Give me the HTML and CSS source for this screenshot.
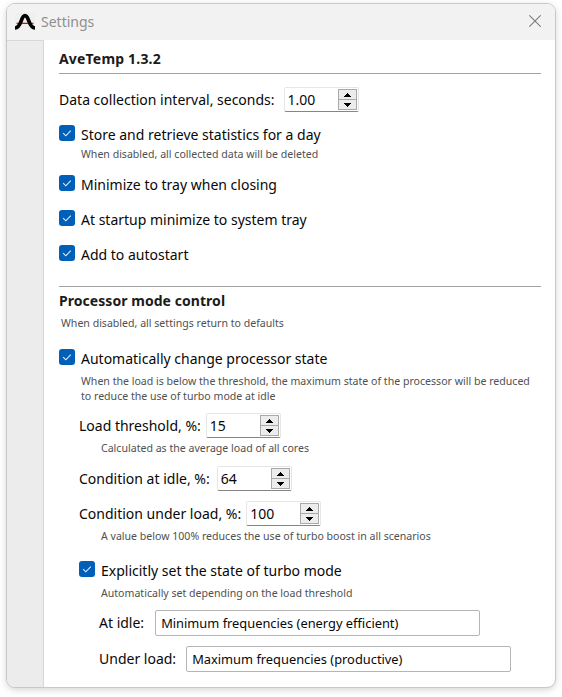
FILE: index.html
```
<!DOCTYPE html>
<html lang="en">
<head>
<meta charset="utf-8">
<title>Settings</title>
<link rel="stylesheet" href="styles.css">
</head>
<body>
<svg class="defs" aria-hidden="true">
  <symbol id="check" viewBox="0 0 16 16"><path d="M4.200 8.200l2.600 2.600 5-5.100" fill="none" stroke="#e4effa" stroke-width="1.100"/></symbol>
  <symbol id="arrows" viewBox="0 0 19 21" shape-rendering="crispEdges">
    <rect width="19" height="21" fill="#ececec"/>
    <path d="M.5.5h18v20H.5zM0 10.500h19" fill="none" stroke="#a9a9a9"/>
    <path d="M9 4h1v1h1v1h1v1h1v1H6V7h1V6h1V5h1zM6 14h7v1h-1v1h-1v1h-1v1H9v-1H8v-1H7v-1H6z" fill="#000"/>
  </symbol>
</svg>
<div class="window">
  <header class="titlebar">
    <svg class="logo" width="20" height="18" viewBox="0 0 20 18"><rect width="20" height="17" fill="#efefef"/><path d="M1.500 10.400h17" stroke="#e01b24" stroke-width="1.400"/><path d="M0 15C6.500 15 5.800 2.700 10 2.700s3.500 12.300 10 12.300" fill="none" stroke="#000" stroke-width="3.700"/><path d="M7 10.400h6" stroke="#c8141d" stroke-width="1"/></svg>
    <span class="title">Settings</span>
    <svg class="close" width="12" height="12" viewBox="0 0 12 12"><path d="M.3.3l11.400 11.400M11.700.3L.3 11.700" stroke="#7c7c7c" stroke-width="1.100"/></svg>
  </header>
  <div class="body">
    <aside class="rail"></aside>
    <main class="content">
      <h1 class="heading version">AveTemp 1.3.2</h1>
      <div class="field interval"><span>Data collection interval, seconds:</span><span class="spin"><span>1.00</span><svg><use href="#arrows"/></svg></span></div>
      <div class="option"><svg class="box"><use href="#check"/></svg><span>Store and retrieve statistics for a day</span></div>
      <p class="hint stats-hint">When disabled, all collected data will be deleted</p>
      <div class="option"><svg class="box"><use href="#check"/></svg><span>Minimize to tray when closing</span></div>
      <div class="option spaced"><svg class="box"><use href="#check"/></svg><span>At startup minimize to system tray</span></div>
      <div class="option spaced"><svg class="box"><use href="#check"/></svg><span>Add to autostart</span></div>
      <h2 class="heading processor">Processor mode control</h2>
      <p class="hint defaults-hint">When disabled, all settings return to defaults</p>
      <div class="option"><svg class="box"><use href="#check"/></svg><span>Automatically change processor state</span></div>
      <p class="hint auto-hint">When the load is below the threshold, the maximum state of the processor will be reduced<br>to reduce the use of turbo mode at idle</p>
      <section class="nested">
        <div class="field"><span>Load threshold, %:</span><span class="spin"><span>15</span><svg><use href="#arrows"/></svg></span></div>
        <p class="hint load-hint">Calculated as the average load of all cores</p>
        <div class="field idle"><span>Condition at idle, %:</span><span class="spin"><span>64</span><svg><use href="#arrows"/></svg></span></div>
        <div class="field under"><span>Condition under load, %:</span><span class="spin"><span>100</span><svg><use href="#arrows"/></svg></span></div>
        <p class="hint boost-hint">A value below 100% reduces the use of turbo boost in all scenarios</p>
        <div class="option"><svg class="box"><use href="#check"/></svg><span>Explicitly set the state of turbo mode</span></div>
        <p class="hint turbo-hint">Automatically set depending on the load threshold</p>
        <div class="field mode"><span>At idle:</span><span class="select idle-select">Minimum frequencies (energy efficient)</span></div>
        <div class="field mode"><span>Under load:</span><span class="select">Maximum frequencies (productive)</span></div>
      </section>
    </main>
  </div>
</div>
</body>
</html>
```
FILE: styles.css
```
* { box-sizing: border-box; }
body {
  margin: 0;
  padding: 3px 6px 9px;
  height: 697px;
  background: #fff;
  color: #080808;
  font: 14px/20px "Noto Sans", "Open Sans", sans-serif;
  white-space: nowrap;
  overflow: hidden;
}
h1, h2, p { margin: 0; }
.defs { display: none; }
.window {
  display: flex;
  flex-direction: column;
  height: 685px;
  border: 1px solid #c8c8c8;
  border-radius: 9px;
  overflow: hidden;
  background: #fff;
  box-shadow: 0 2px 7px rgba(0, 0, 0, 0.17);
}
.titlebar {
  display: flex;
  align-items: center;
  flex: 0 0 36px;
  padding: 0 14px 0 8px;
  background: #f2f2f2;
}
.title { margin-left: 6px; color: #8f8f8f; }
.close { margin: -2px 0 0 auto; }
.body { display: flex; flex: 1; }
.rail {
  flex: 0 0 37px;
  background: #ececec;
  border-top: 1px solid #d8d8d8;
  border-right: 1px solid #d8d8d8;
}
.content { flex: 1; padding: 9px 14px 0 15px; }
.heading {
  font-size: 14px;
  line-height: 20px;
  font-weight: bold;
  letter-spacing: 0.05px;
  color: #1b1b1b;
}
.version {
  height: 25px;
  letter-spacing: 0.18px;
  border-bottom: 1px solid #a0a0a0;
}
.processor {
  margin-top: 23px;
  padding-top: 4px;
  border-top: 1px solid #a0a0a0;
}
.hint {
  font-size: 10.58px;
  line-height: 15px;
  color: #505050;
}
.field { display: flex; align-items: center; height: 25px; }
.interval { margin: 13px 0; }
.spin {
  display: flex;
  align-items: center;
  width: 75px;
  height: 25px;
  margin-left: 5px;
  padding: 1px 1px 0 3px;
  border: 1px solid #e6e6e6;
  border-bottom-color: #868686;
  border-radius: 2px;
}
.interval .spin { margin-left: 9px; }
.idle .spin { margin-left: 7px; }
.spin svg { width: 19px; height: 21px; margin: -1px 0 0 auto; }
.option { display: flex; height: 18px; }
.option span { line-height: 19px; }
.box {
  width: 16px;
  height: 16px;
  margin-right: 6px;
  border-radius: 3px;
  background: #005fb8;
}
.spaced { margin-top: 17px; }
.stats-hint { margin: 4px 0 13px 22px; }
.defaults-hint { margin: 5px 0 18px 2px; }
.auto-hint { margin: 7px 0 9px 22px; }
.nested { padding-left: 20px; }
.load-hint { margin: 3px 0 10px 22px; }
.under { margin-top: 10px; }
.boost-hint { margin: 3px 0 17px 22px; }
.turbo-hint { margin: 7px 0 9px 22px; }
.mode { height: 26px; padding-left: 20px; }
.mode + .mode { margin-top: 10px; }
.select {
  width: 325px;
  height: 26px;
  margin-left: 10px;
  padding-left: 5px;
  border: 1px solid #b5b5b5;
  border-radius: 2px;
  font-size: 12.85px;
  line-height: 24px;
}
.idle-select { margin-left: 11px; }
```
